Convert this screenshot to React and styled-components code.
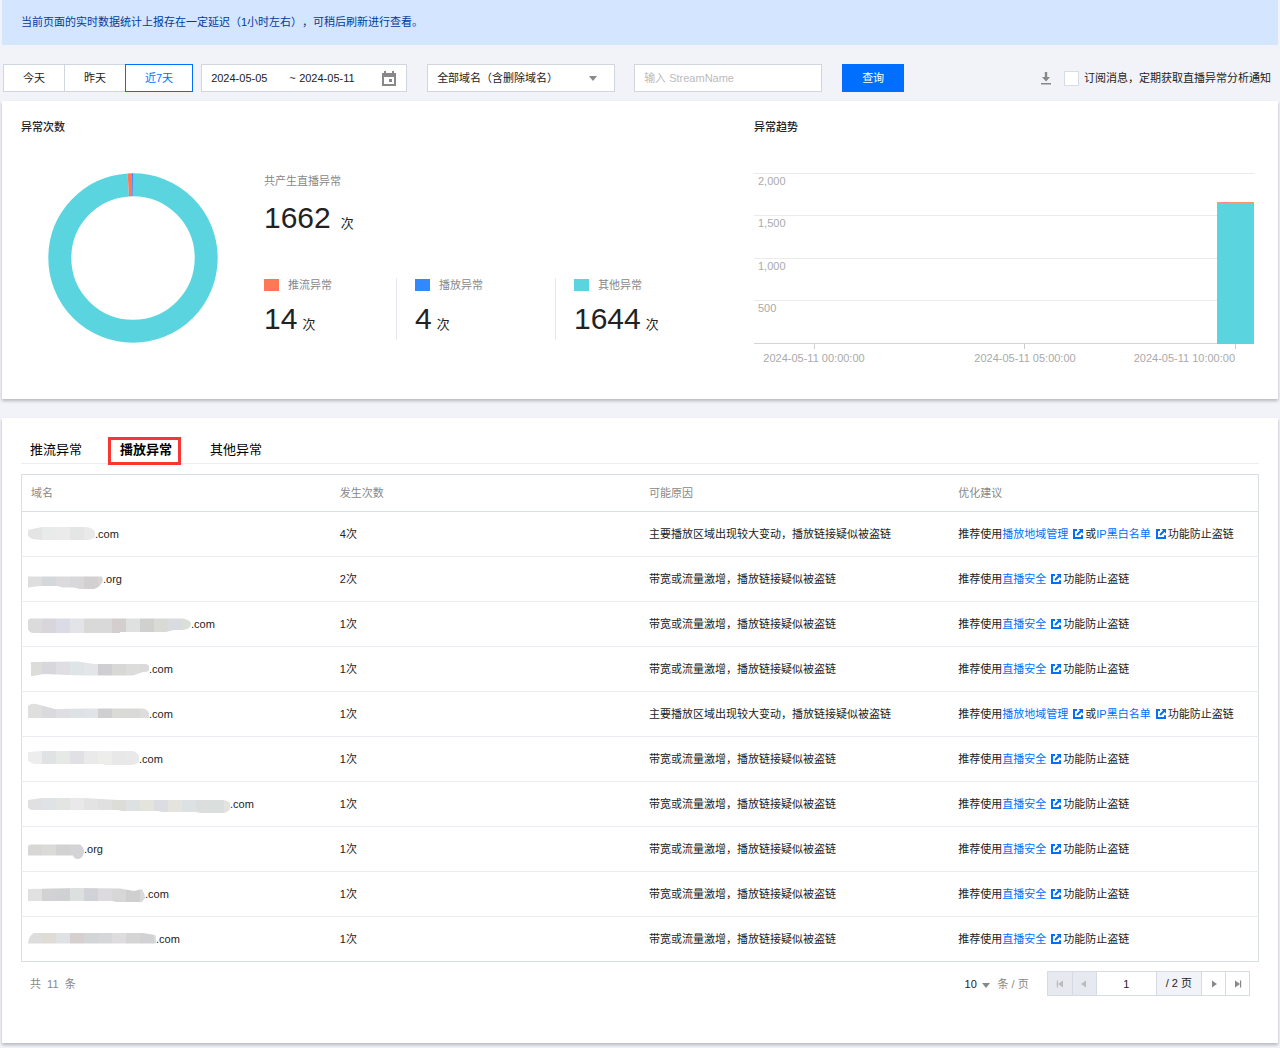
import React, { useState } from 'react';
import styled, { createGlobalStyle, css } from 'styled-components';

const COLORS = {
  push: '#ff7856',
  play: '#3288ff',
  other: '#5ad5e0',
  primary: '#006eff',
};

const BLOCK = 14;

const ranges = ['今天', '昨天', '近7天'];

const stats = [
  { name: '推流异常', value: 14, color: COLORS.push },
  { name: '播放异常', value: 4, color: COLORS.play },
  { name: '其他异常', value: 1644, color: COLORS.other },
];

const tabs = ['推流异常', '播放异常', '其他异常'];

const REASON_AREA = '主要播放区域出现较大变动，播放链接疑似被盗链';
const REASON_FLOW = '带宽或流量激增，播放链接疑似被盗链';

// The hidden part of each domain: outline and the colour of every 14px block
const rows = [
  {
    suffix: '.com', count: 4, reason: REASON_AREA, links: ['播放地域管理', 'IP黑白名单'], width: 67,
    path: 'M0 8L14 5H58Q66 6 68 12Q67 17 60 18H14L4 17L0 14Z',
    blocks: ['#e4e4e4', '#e9ebea', '#ebebeb', '#e4e5e5', '#e9e9ea'],
  },
  {
    suffix: '.org', count: 2, reason: REASON_FLOW, links: ['直播安全'], width: 75,
    path: 'M0 9.5H74L75 13Q73 20 66 22H52L46 20.5H34L30 19H12L0 20.5Z',
    blocks: ['#dfdedf', '#d5d8da', '#dcdadd', '#d8d7d9', '#d2d0d0', '#d6d6d4'],
  },
  {
    suffix: '.com', count: 1, reason: REASON_FLOW, links: ['直播安全'], width: 163,
    path: 'M2 6.5H155Q163 8 163 12Q163 17 155 18H146L138 20H92V21H4Q0 19 0 17V8Z',
    blocks: ['#dcdbdb', '#d8d6da', '#dadbe4', '#e3e4e7', '#d9d9d8', '#dad9d9', '#d4cfce', '#dfe1e0', '#d0d1cf', '#d9dad5', '#d9dbe0', '#dbdfda'],
  },
  {
    suffix: '.com', count: 1, reason: REASON_FLOW, links: ['直播安全'], width: 121,
    path: 'M3 5L50 4.5L66 7H118Q122 8 122 12Q121 15 115 15L105 18.5H60L40 18L16 17L5 19H3Z',
    blocks: ['#dcdcdb', '#d8d7db', '#dfdee3', '#dfe4e6', '#e3e5e8', '#cfcfd1', '#d8d8d6', '#dcdddb', '#dadbd9'],
  },
  {
    suffix: '.com', count: 1, reason: REASON_AREA, links: ['播放地域管理', 'IP黑白名单'], width: 121,
    path: 'M0 4Q3 1 8 2L27 7L60 6.5H116Q122 9 122 16H0Z',
    blocks: ['#dfdfdd', '#dadadc', '#dedee3', '#dde2e4', '#e0e3e7', '#cfcfd1', '#dadbd6', '#d9dad8', '#dcdddc'],
  },
  {
    suffix: '.com', count: 1, reason: REASON_FLOW, links: ['直播安全'], width: 111,
    path: 'M0 5L14 4H105Q111 6 112 12Q111 17 104 18H76V17H6L0 14Z',
    blocks: ['#ededee', '#e1e2e4', '#e7e9e7', '#e1e1e5', '#eaeaea', '#ededeb', '#e8e8e8', '#e9e9e9'],
  },
  {
    suffix: '.com', count: 1, reason: REASON_FLOW, links: ['直播安全'], width: 202,
    path: 'M0 8L14 6H56L90 8H195Q203 9 203 14Q202 20 196 21H172L168 20H134L130 19H94L90 18H4Q0 17 0 14Z',
    blocks: ['#e0dfe1', '#dfe3e6', '#e3e5e3', '#eae8ea', '#e2e3e2', '#e0e0e0', '#dcddd6', '#dde1e2', '#e4e4dd', '#dcdde2', '#e5e3de', '#dce1e4', '#dcdedd', '#dadfdd', '#e2e4df'],
  },
  {
    suffix: '.org', count: 1, reason: REASON_FLOW, links: ['直播安全'], width: 56,
    path: 'M2 7.5H52Q56 10 56 15Q55 22 50 22Q46 22 45 18.5H0V9Z',
    blocks: ['#d8d7d5', '#dadad9', '#d2d2d3', '#d4d4d6'],
  },
  {
    suffix: '.com', count: 1, reason: REASON_FLOW, links: ['直播安全'], width: 117,
    path: 'M0 7L50 6L92 6.5L106 9L114 7Q117 12 117 16L114 20H88L84 19H0Z',
    blocks: ['#e2e1e2', '#d2d1d3', '#d0d1d2', '#dce1df', '#d1d2d8', '#dcdadd', '#d8d7d8', '#d0cfcf', '#d9d9da'],
  },
  {
    suffix: '.com', count: 1, reason: REASON_FLOW, links: ['直播安全'], width: 128,
    path: 'M0 16.5Q1 8 6 6H115L127 8L130 12V16.5Z',
    blocks: ['#dedddd', '#dfdcd6', '#dfe1e4', '#d5cfd0', '#d4d5d7', '#d6d7d9', '#dedcdf', '#d5d5d6', '#d2d2d4', '#dadcdf'],
  },
];

const Mosaic = ({ id, width, path, blocks }) => (
  <svg width={width} height="24" viewBox={`0 0 ${width} 24`} aria-hidden="true">
    <clipPath id={id}>
      <path d={path} />
    </clipPath>
    <g clipPath={`url(#${id})`}>
      {blocks.map((fill, i) => (
        <rect key={i} x={i * BLOCK} y="0" width={BLOCK} height="24" fill={fill} />
      ))}
    </g>
  </svg>
);

const Donut = () => {
  const r = 73.2;
  const length = 2 * Math.PI * r;
  const push = length * 0.0085;
  const play = length * 0.0035;
  const rest = length - push - play;
  return (
    <DonutSvg viewBox="0 0 170 170" role="img" aria-label="异常次数">
      <g fill="none" strokeWidth="23" transform="rotate(-90 85 85)">
        <circle
          cx="85" cy="85" r={r} stroke={COLORS.other}
          strokeDasharray={`${rest} ${length - rest}`}
        />
        <circle
          cx="85" cy="85" r={r} stroke={COLORS.push}
          strokeDasharray={`${push} ${length - push}`}
          strokeDashoffset={push + play}
        />
        <circle
          cx="85" cy="85" r={r} stroke={COLORS.play}
          strokeDasharray={`${play} ${length - play}`}
          strokeDashoffset={play}
        />
      </g>
    </DonutSvg>
  );
};

const TrendChart = () => (
  <ChartSvg viewBox="0 0 500 200" role="img" aria-label="异常趋势">
    {[['2,000', 0], ['1,500', 42], ['1,000', 85], ['500', 127]].map(([label, y]) => (
      <g key={label}>
        <rect x="0" y={y} width="500" height="1" fill="#ebebeb" />
        <text x="4" y={y + 12}>{label}</text>
      </g>
    ))}
    <rect x="0" y="170" width="500" height="1" fill="#d4d4d4" />
    {[60, 270, 481].map(x => (
      <rect key={x} x={x} y="171" width="1" height="5" fill="#ccc" />
    ))}
    <rect x="463" y="29" width="37" height="2" fill={COLORS.push} fillOpacity="0.8" />
    <rect x="463" y="30" width="37" height="141" fill={COLORS.other} />
    <text x="60" y="189" textAnchor="middle">2024-05-11 00:00:00</text>
    <text x="271" y="189" textAnchor="middle">2024-05-11 05:00:00</text>
    <text x="481" y="189" textAnchor="end">2024-05-11 10:00:00</text>
  </ChartSvg>
);

const CalendarIcon = () => (
  <svg width="14" height="15" viewBox="0 0 14 15" aria-hidden="true">
    <path fill="#888" fillRule="evenodd" d="M2 0h2v2h6V0h2v2h2v13H0V2h2zM2 6v7h10V6zM7 8h3v3H7z" />
  </svg>
);

const DownloadIcon = () => (
  <svg width="12" height="13" viewBox="0 0 12 13" aria-hidden="true">
    <path fill="#888" d="M4.8 0h2.4v5H10L6 9.5 2 5h2.8zM1 11h10v1.5H1z" />
  </svg>
);

const ExternalIcon = () => (
  <svg width="10" height="10" viewBox="0 0 10 10" aria-hidden="true">
    <path fill="none" stroke="#006eff" strokeWidth="2" d="M4 1H1v8h8V6.2M4 6L8.2 1.8" />
    <path fill="#006eff" d="M5.4 0H10v4.6z" />
  </svg>
);

const PageIcon = ({ back, edge, color }) => (
  <svg width="8" height="8" viewBox="0 0 8 8" aria-hidden="true">
    <g fill={color} transform={back ? 'rotate(180 4 4)' : undefined}>
      <path d={edge ? 'M1 .5L6 4L1 7.5z' : 'M2 .5L7 4L2 7.5z'} />
      {edge && <path d="M6 .5h1.2v7H6z" />}
    </g>
  </svg>
);

const App = () => {
  const [range, setRange] = useState('近7天');
  const [tab, setTab] = useState('播放异常');

  return (
    <Page>
      <GlobalStyle />
      <Notice>当前页面的实时数据统计上报存在一定延迟（1小时左右），可稍后刷新进行查看。</Notice>

      <Toolbar>
        <Segment>
          {ranges.map(name => (
            <SegmentButton key={name} type="button" $active={name === range} onClick={() => setRange(name)}>
              {name}
            </SegmentButton>
          ))}
        </Segment>
        <DateRange>
          <DateInput aria-label="开始日期" defaultValue="2024-05-05" />
          <span>~</span>
          <DateInput aria-label="结束日期" defaultValue="2024-05-11" />
          <IconButton type="button" aria-label="选择日期"><CalendarIcon /></IconButton>
        </DateRange>
        <DomainSelect>
          <select aria-label="域名" defaultValue="all">
            <option value="all">全部域名（含删除域名）</option>
          </select>
        </DomainSelect>
        <StreamInput aria-label="StreamName" placeholder="输入 StreamName" />
        <QueryButton type="button">查询</QueryButton>
        <Subscribe>
          <IconButton type="button" aria-label="下载"><DownloadIcon /></IconButton>
          <Checkbox type="checkbox" id="subscribe" />
          <label htmlFor="subscribe">订阅消息，定期获取直播异常分析通知</label>
        </Subscribe>
      </Toolbar>

      <Overview>
        <CountPanel>
          <Title>异常次数</Title>
          <CountBody>
            <Donut />
            <Summary>
              <Caption>共产生直播异常</Caption>
              <Figure $gap={10}>1662<small>次</small></Figure>
              <StatList>
                {stats.map(({ name, value, color }) => (
                  <Stat key={name}>
                    <Legend><Swatch $color={color} />{name}</Legend>
                    <Figure $gap={5}>{value}<small>次</small></Figure>
                  </Stat>
                ))}
              </StatList>
            </Summary>
          </CountBody>
        </CountPanel>
        <TrendPanel>
          <Title>异常趋势</Title>
          <TrendChart />
        </TrendPanel>
      </Overview>

      <Details>
        <TabList role="tablist">
          {tabs.map(name => (
            <Tab key={name} type="button" role="tab" aria-selected={name === tab} $active={name === tab} onClick={() => setTab(name)}>
              {name}
            </Tab>
          ))}
        </TabList>
        <Table>
          <thead>
            <tr>
              <th>域名</th>
              <th>发生次数</th>
              <th>可能原因</th>
              <th>优化建议</th>
            </tr>
          </thead>
          <tbody>
            {rows.map(({ suffix, count, reason, links, ...mosaic }, i) => (
              <tr key={i}>
                <td>
                  <Domain><Mosaic id={`domain-${i}`} {...mosaic} />{suffix}</Domain>
                </td>
                <td>{count}次</td>
                <td>{reason}</td>
                <td>
                  推荐使用
                  {links.map((link, n) => (
                    <React.Fragment key={link}>
                      {n > 0 && '或'}
                      <DocLink href="#">{link}<ExternalIcon /></DocLink>
                    </React.Fragment>
                  ))}
                  功能防止盗链
                </td>
              </tr>
            ))}
          </tbody>
        </Table>
        <Footer>
          <Total>共&nbsp; 11 &nbsp;条</Total>
          <PageSize>
            <select aria-label="每页条数" defaultValue="10">
              <option>10</option>
              <option>20</option>
            </select>
            <span>条 / 页</span>
          </PageSize>
          <Pager>
            <PageButton type="button" disabled aria-label="第一页"><PageIcon back edge color="#bbb" /></PageButton>
            <PageButton type="button" disabled aria-label="上一页"><PageIcon back color="#bbb" /></PageButton>
            <PageInput aria-label="页码" defaultValue="1" />
            <PageCount>/ 2 页</PageCount>
            <PageButton type="button" aria-label="下一页"><PageIcon color="#888" /></PageButton>
            <PageButton type="button" aria-label="最后一页"><PageIcon edge color="#888" /></PageButton>
          </Pager>
        </Footer>
      </Details>
    </Page>
  );
};

const GlobalStyle = createGlobalStyle`
  * {
    box-sizing: border-box;
  }

  body {
    margin: 0;
    background: #f2f3f8;
    color: #222;
    font-family: 'Liberation Sans', 'Noto Sans CJK SC', sans-serif;
    font-size: 11px;
    line-height: 20px;
    text-spacing-trim: space-all;
  }

  button, input, select {
    font: inherit;
    color: inherit;
    border-radius: 0;
    margin: 0;
  }
`;

const Page = styled.div`
  padding: 0 2px 6px;
`;

const Notice = styled.div`
  padding: 12px 19px 13px;
  background: #d4e6ff;
  color: #003b9c;
`;

const Toolbar = styled.div`
  display: flex;
  align-items: center;
  padding: 19px 7px 9px 1px;
`;

const control = css`
  height: 28px;
  border: 1px solid #d0d5df;
  background: #fff;
`;

const Segment = styled.div`
  display: flex;
`;

const SegmentButton = styled.button`
  ${control}
  padding: 0 19px;
  cursor: pointer;

  & + & {
    margin-left: -1px;
  }

  ${props => props.$active && css`
    border-color: ${COLORS.primary};
    color: ${COLORS.primary};
  `}
`;

const DateRange = styled.div`
  ${control}
  display: flex;
  align-items: center;
  width: 206px;
  margin-left: 8px;
  padding: 0 10px 0 9px;

  span {
    width: 10px;
  }
`;

const DateInput = styled.input`
  width: 78px;
  min-width: 0;
  padding: 0;
  border: 0;
  background: none;
`;

const IconButton = styled.button`
  display: flex;
  padding: 0;
  border: 0;
  background: none;
  cursor: pointer;

  ${DateRange} & {
    margin-left: auto;
  }
`;

const arrow = css`
  content: '';
  position: absolute;
  border: 4px solid transparent;
  border-top: 5px solid #888;
  border-bottom: 0;
  pointer-events: none;
`;

const DomainSelect = styled.div`
  position: relative;
  width: 188px;
  margin-left: 20px;

  select {
    ${control}
    width: 100%;
    padding: 0 9px;
    appearance: none;
  }

  &::after {
    ${arrow}
    top: 12px;
    right: 18px;
  }
`;

const StreamInput = styled.input`
  ${control}
  width: 188px;
  margin-left: 19px;
  padding: 0 9px;

  &::placeholder {
    color: #bbb;
  }
`;

const QueryButton = styled.button`
  height: 28px;
  margin-left: 20px;
  padding: 0 20px;
  border: 0;
  background: ${COLORS.primary};
  color: #fff;
  cursor: pointer;
`;

const Subscribe = styled.div`
  display: flex;
  align-items: center;
  margin-left: auto;
`;

const Checkbox = styled.input`
  appearance: none;
  width: 15px;
  height: 15px;
  border: 1px solid #d8dce5;
  background: #fff;

  && {
    margin: 0 5px 0 12px;
  }

  &:checked {
    background: ${COLORS.primary};
  }
`;

const Card = styled.section`
  background: #fff;
  box-shadow: 0 2px 3px rgba(54, 58, 80, 0.32);
`;

const Overview = styled(Card)`
  display: flex;
  padding: 16px 24px 26px 19px;
`;

const CountPanel = styled.div`
  flex: 733;
  min-width: 0;
`;

const TrendPanel = styled.div`
  flex: 500;
  min-width: 0;
`;

const Title = styled.h2`
  margin: 0 0 36px;
  font-size: 11px;
  font-weight: 500;
`;

const CountBody = styled.div`
  display: flex;
  padding-left: 27px;
`;

const DonutSvg = styled.svg`
  width: 170px;
  height: 170px;
  flex: none;
`;

const ChartSvg = styled.svg`
  display: block;
  width: 100%;

  text {
    fill: #aaa;
    font-size: 11px;
  }
`;

const Summary = styled.div`
  margin-left: 46px;
`;

const Caption = styled.div`
  margin-bottom: 11px;
  color: #888;
  line-height: 16px;
`;

const Figure = styled.div`
  font-size: 30px;
  line-height: 36px;

  small {
    margin-left: ${props => props.$gap}px;
    font-size: 13px;
    line-height: 1;
  }
`;

const StatList = styled.div`
  display: flex;
  margin-top: 42px;
`;

const Stat = styled.div`
  width: 159px;
  padding-bottom: 3px;

  &:first-child {
    width: 133px;
  }

  & + & {
    padding-left: 18px;
  }

  &:not(:last-child) {
    border-right: 1px solid #e5e8ed;
  }
`;

const Legend = styled.div`
  display: flex;
  align-items: center;
  margin-bottom: 9px;
  color: #888;
  line-height: 14px;
`;

const Swatch = styled.i`
  width: 15px;
  height: 12px;
  margin-right: 9px;
  background: ${props => props.$color};
`;

const Details = styled(Card)`
  margin-top: 19px;
  padding: 18px 19px 47px;
`;

const TabList = styled.div`
  display: flex;
  gap: 20px;
  margin-bottom: 10px;
  border-bottom: 1px solid #ebedf0;
`;

const Tab = styled.button`
  position: relative;
  height: 27px;
  padding: 0 9px;
  border: 0;
  background: none;
  color: #000;
  font-size: 13px;
  cursor: pointer;

  ${props => props.$active && css`
    font-weight: 700;

    &::after {
      content: '';
      position: absolute;
      inset: 1px 0 -2px -3px;
      border: 3px solid #fb3434;
    }
  `}
`;

const Table = styled.table`
  width: 100%;
  border: 1px solid #dadee6;
  border-collapse: collapse;
  table-layout: fixed;

  th, td {
    height: 45px;
    padding: 0 9px;
    border-bottom: 1px solid #e9ecf1;
    text-align: left;
    white-space: nowrap;
  }

  th {
    height: 37px;
    border-color: #dadee6;
    color: #888;
    font-weight: 400;
  }

  td:first-child {
    padding-left: 6px;
  }

  tr:last-child td {
    border-color: #dadee6;
  }
`;

const Domain = styled.div`
  display: flex;
  align-items: center;
`;

const DocLink = styled.a`
  color: ${COLORS.primary};
  text-decoration: none;

  svg {
    margin: 0 2px 0 5px;
    vertical-align: -1px;
  }
`;

const Footer = styled.div`
  display: flex;
  align-items: center;
  padding: 9px 9px 0;
  color: #888;
`;

const Total = styled.span`
  margin-right: auto;
`;

const PageSize = styled.div`
  position: relative;
  display: flex;
  align-items: center;
  margin-right: 18px;

  select {
    width: 33px;
    padding: 0;
    border: 0;
    background: none;
    color: #222;
    appearance: none;
  }

  &::after {
    ${arrow}
    top: 9px;
    left: 17px;
  }
`;

const Pager = styled.div`
  display: flex;
  height: 25px;
  border: 1px solid #d5dae3;
  color: #222;

  && > * + * {
    border-left: 1px solid #d5dae3;
  }
`;

const PageButton = styled.button`
  display: flex;
  align-items: center;
  justify-content: center;
  width: 24px;
  padding: 0;
  border: 0;
  background: #fff;

  &:disabled {
    background: #e6e9ef;
  }
`;

const PageInput = styled.input`
  width: 60px;
  padding: 0;
  border: 0;
  text-align: center;
`;

const PageCount = styled.span`
  padding: 1px 9px 0;
  background: #f2f3f8;
`;

export default App;
